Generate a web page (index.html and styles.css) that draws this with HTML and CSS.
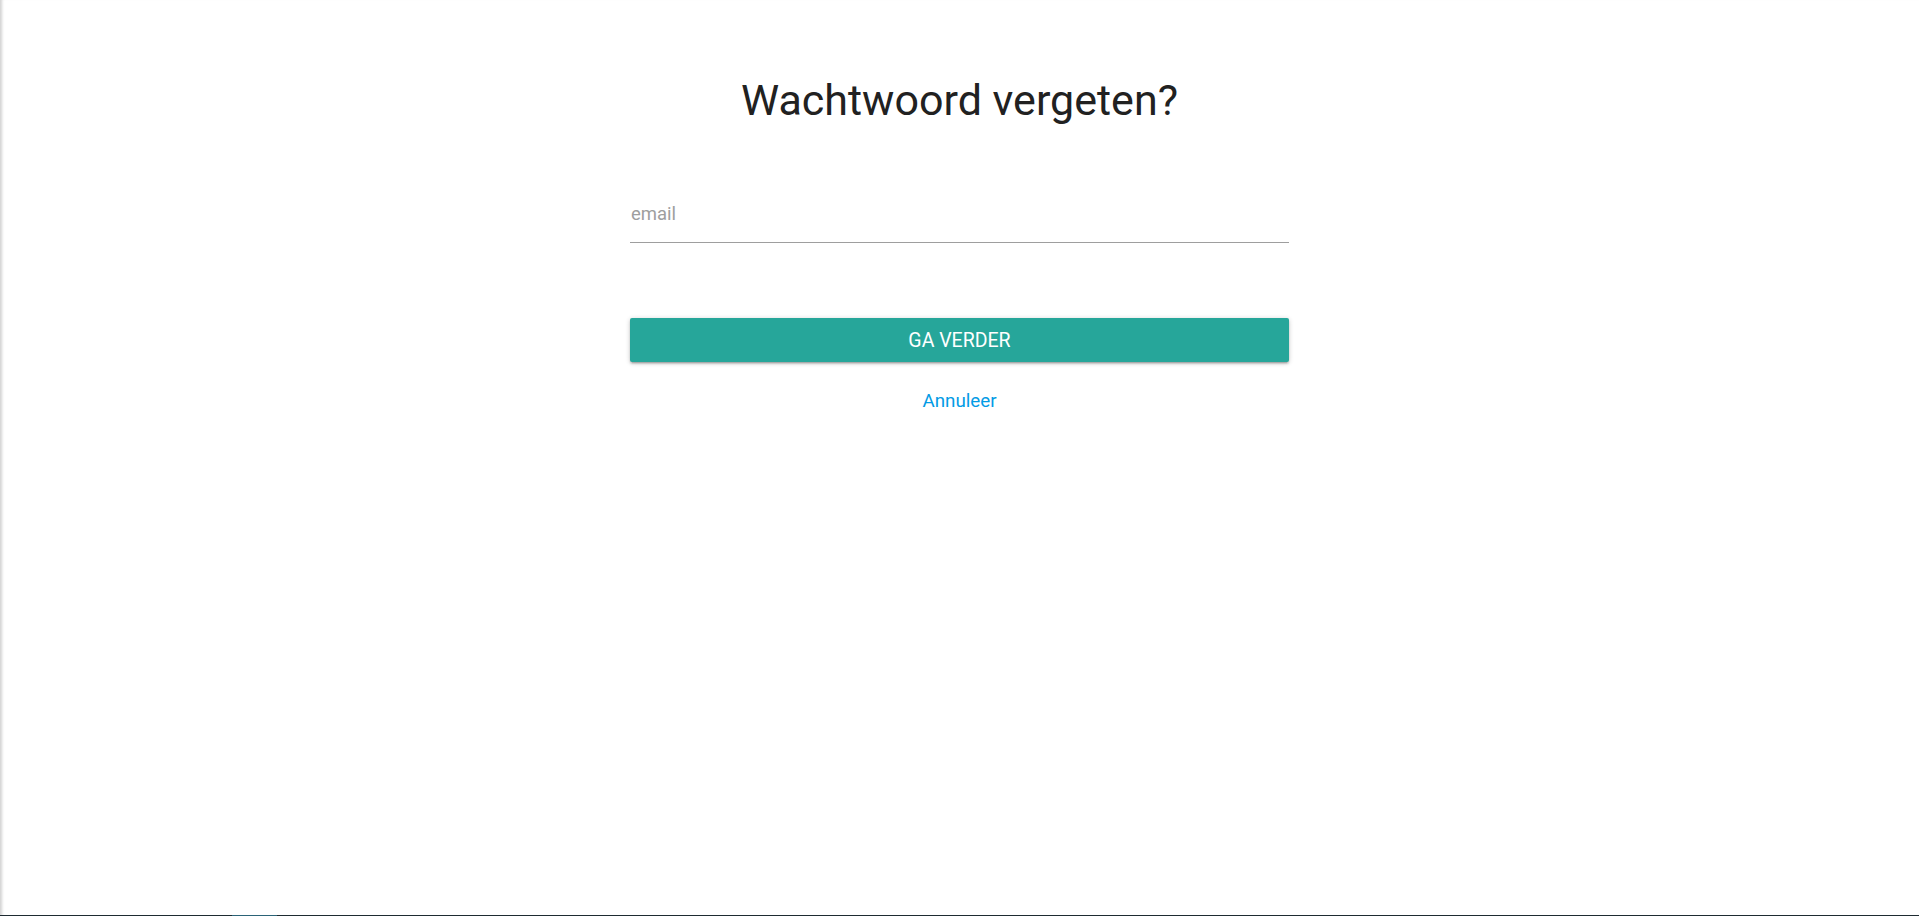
FILE: index.html
```html
<!DOCTYPE html>
<html lang="nl">
<head>
<meta charset="utf-8">
<title>Wachtwoord vergeten?</title>
<link rel="stylesheet" href="styles.css">
</head>
<body>
<main class="page">
  <section class="card">
    <h1 class="title">Wachtwoord vergeten?</h1>
    <form class="form">
      <div class="field">
        <input class="input" type="email" placeholder="email">
      </div>
      <button class="btn" type="button">Ga verder</button>
      <a class="cancel" href="#">Annuleer</a>
    </form>
  </section>
</main>
<div class="bottom-bar"><span class="bottom-seg"></span></div>
</body>
</html>
```
FILE: styles.css
```css
html, body {
  margin: 0;
  padding: 0;
  height: 100%;
  background: #ffffff;
}
body {
  font-family: Roboto, "Liberation Sans", Arial, sans-serif;
  overflow: hidden;
  position: relative;
}
.page {
  height: 100%;
  box-sizing: border-box;
  box-shadow: inset 4px 0 3px -2px rgba(0, 0, 0, 0.18);
  display: flex;
  justify-content: center;
}
.card {
  width: 659px;
  padding-top: 75px;
  display: flex;
  flex-direction: column;
}
.title {
  margin: 0;
  font-size: 43px;
  line-height: 50px;
  font-weight: 400;
  color: #212121;
  text-align: center;
}
.form {
  margin-top: 73px;
  display: flex;
  flex-direction: column;
}
.field {
  display: flex;
}
.input {
  flex: 1;
  box-sizing: content-box;
  height: 32px;
  padding: 0 0 12px 1px;
  margin: 0;
  border: none;
  border-bottom: 1px solid #9e9e9e;
  outline: none;
  background: transparent;
  font-family: inherit;
  font-size: 18.5px;
  color: #212121;
}
.input::placeholder {
  color: #9e9e9e;
}
.btn {
  margin-top: 75px;
  height: 44px;
  border: none;
  border-radius: 2px;
  background: #26a69a;
  color: #ffffff;
  font-family: inherit;
  font-size: 19.5px;
  font-weight: 400;
  text-transform: uppercase;
  letter-spacing: 0;
  box-shadow: 0 2px 2px 0 rgba(0,0,0,0.14), 0 3px 1px -2px rgba(0,0,0,0.12), 0 1px 5px 0 rgba(0,0,0,0.2);
  cursor: pointer;
}
.cancel {
  margin-top: 28px;
  align-self: center;
  font-size: 18.8px;
  line-height: 22px;
  color: #039be5;
  text-decoration: none;
}
.bottom-bar {
  position: absolute;
  left: 0;
  right: 0;
  bottom: 0;
  height: 1px;
  background: #1e2b31;
}
.bottom-seg {
  position: absolute;
  left: 232px;
  width: 45px;
  top: 0;
  height: 1px;
  background: #2b6377;
}
```
